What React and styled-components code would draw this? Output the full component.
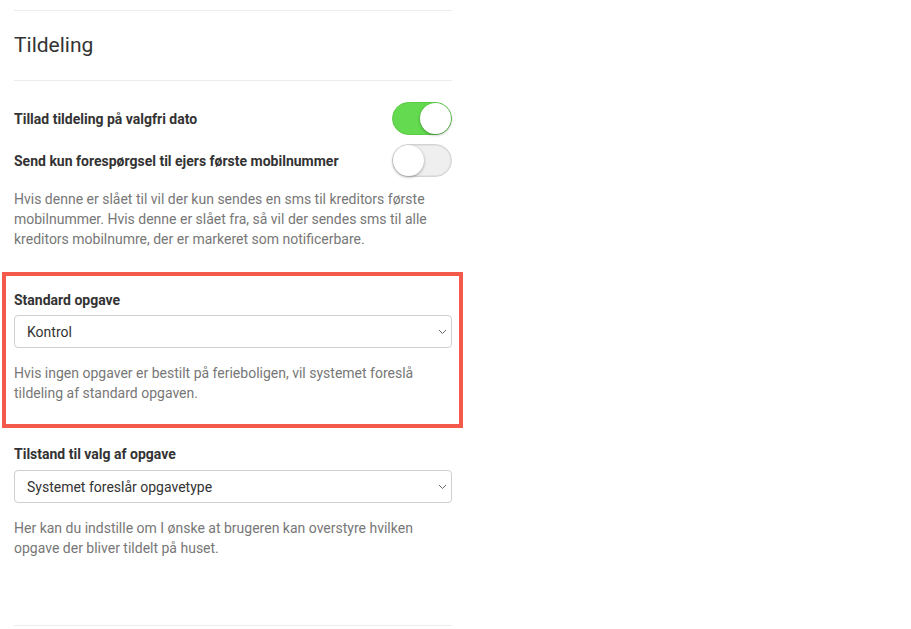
import React from 'react';
import styled, { createGlobalStyle } from 'styled-components';

const GlobalStyle = createGlobalStyle`
  html, body {
    margin: 0;
    padding: 0;
    background: #fff;
  }
  body {
    font-family: Roboto, "Liberation Sans", Arial, sans-serif;
    color: #333;
  }
`;

const Page = styled.div`
  width: 438px;
  padding: 10px 0 0 14px;
`;

const Divider = styled.div`
  height: 1px;
  background: #ececec;
`;

const SectionTitle = styled.h2`
  margin: 0;
  padding: 23px 0;
  font-size: 21px;
  line-height: 23px;
  font-weight: 400;
  color: #333;
  border-top: 1px solid #ececec;
  border-bottom: 1px solid #ececec;
`;

const ToggleList = styled.div`
  display: flex;
  flex-direction: column;
  gap: 9px;
  margin-top: 21px;
`;

const ToggleRow = styled.div`
  display: flex;
  align-items: center;
  justify-content: space-between;
`;

const Label = styled.label`
  display: block;
  font-size: 14px;
  line-height: 20px;
  font-weight: 700;
  color: #333;
`;

const Switch = styled.span`
  position: relative;
  box-sizing: border-box;
  width: 60px;
  height: 33px;
  border-radius: 17px;
  border: 1px solid ${p => (p.$on ? '#5ccb47' : '#d4d4d4')};
  background: ${p => (p.$on ? '#64da50' : '#efefef')};
  box-shadow: ${p => (p.$on ? 'none' : 'inset 0 0 0 1px #e2e2e2')};

  &::after {
    content: '';
    position: absolute;
    top: 0;
    left: ${p => (p.$on ? '27px' : '0')};
    width: 31px;
    height: 31px;
    border-radius: 50%;
    background: #fff;
    box-shadow: 0 1px 3px rgba(0, 0, 0, 0.35);
  }
`;

const Help = styled.p`
  margin: ${p => p.$top || '15px'} 0 0;
  font-size: 14px;
  line-height: 20px;
  color: #777;
`;

const Highlight = styled.div`
  margin: 23px -11px 0 -12px;
  padding: 14px 7px 21px 8px;
  border: 4px solid #f35a4b;
`;

const Group = styled.div`
  margin-top: ${p => p.$top || '0'};
`;

const SelectBox = styled.div`
  margin-top: ${p => p.$top || '6px'};
  box-sizing: border-box;
  height: 33px;
  border: 1px solid #cfcfcf;
  border-radius: 4px;
  background: #fff;
  display: flex;
  align-items: center;
  padding: 0 4px 0 12px;
  font-size: 14px;
  color: #333;
`;

const SelectValue = styled.span`
  flex: 1;
`;

const Chevron = () => (
  <svg width="9" height="6" viewBox="0 0 9 6" fill="none">
    <path d="M1 1l3.5 3.5L8 1" stroke="#666" strokeWidth="1" />
  </svg>
);

const Select = ({ value, top }) => (
  <SelectBox $top={top}>
    <SelectValue>{value}</SelectValue>
    <Chevron />
  </SelectBox>
);

const BottomRule = styled(Divider)`
  margin-top: 67px;
`;

export default function App() {
  return (
    <>
      <GlobalStyle />
      <Page>
        <SectionTitle>Tildeling</SectionTitle>
        <ToggleList>
          <ToggleRow>
            <Label>Tillad tildeling på valgfri dato</Label>
            <Switch $on />
          </ToggleRow>
          <ToggleRow>
            <Label>Send kun forespørgsel til ejers første mobilnummer</Label>
            <Switch />
          </ToggleRow>
        </ToggleList>
        <Help $top="12px">
          Hvis denne er slået til vil der kun sendes en sms til kreditors første
          mobilnummer. Hvis denne er slået fra, så vil der sendes sms til alle
          kreditors mobilnumre, der er markeret som notificerbare.
        </Help>
        <Highlight>
          <Label>Standard opgave</Label>
          <Select value="Kontrol" top="5px" />
          <Help>
            Hvis ingen opgaver er bestilt på ferieboligen, vil systemet foreslå
            tildeling af standard opgaven.
          </Help>
        </Highlight>
        <Group $top="16px">
          <Label>Tilstand til valg af opgave</Label>
          <Select value="Systemet foreslår opgavetype" />
          <Help>
            Her kan du indstille om I ønske at brugeren kan overstyre hvilken
            opgave der bliver tildelt på huset.
          </Help>
        </Group>
        <BottomRule />
      </Page>
    </>
  );
}
